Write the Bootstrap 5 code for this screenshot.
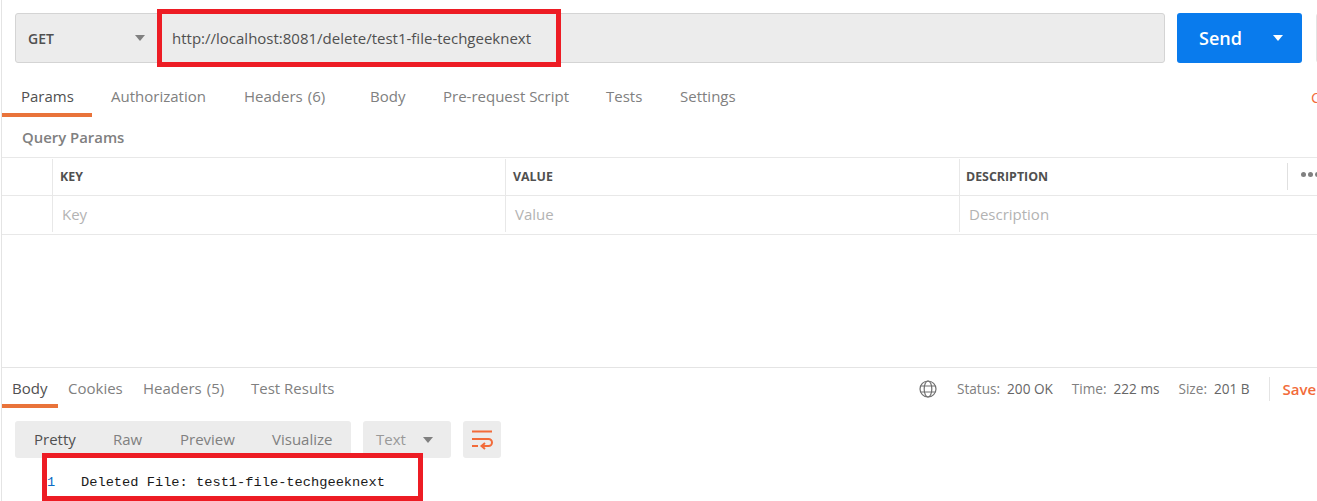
<!DOCTYPE html>
<html lang="en">
<head>
<meta charset="utf-8">
<title>Postman request</title>
<link href="https://cdn.jsdelivr.net/npm/bootstrap@5.3.0/dist/css/bootstrap.min.css" rel="stylesheet">
<style>
html,body{margin:0;height:501px;overflow:hidden;background:#fff}
body{font-family:"Open Sans","Liberation Sans",sans-serif;font-size:15px;color:#808080}
.shell{height:501px;width:1317px;border-left:1px solid #e4e4e4;margin-left:1px;display:flex;flex-direction:column;overflow:hidden;position:relative}
.topbar{margin:13px 0 0 13px;height:50px;display:flex;flex:none}
.urlwrap{flex:none;width:1150px;height:50px;background:#ececec;border:1px solid #d4d4d4;border-radius:3px;display:flex;align-items:center;position:relative}
.method{width:143px;padding-left:12px;display:flex;justify-content:space-between;align-items:center;color:#505050;font-weight:600;font-size:14px;padding-right:14px}
.urltext{padding-left:13px;color:#505050}
.tri{width:0;height:0;border-left:5px solid transparent;border-right:5px solid transparent;border-top:6px solid #808080;display:block}
.sendbtn{flex:none;width:125px;height:50px;margin-left:12px;background:#097bed;border:0;border-radius:3px;color:#fff;font-size:18px;font-weight:600;display:flex;align-items:center;padding:0 0 0 22px;justify-content:space-between}
.sendbtn .tri{border-top-color:#fff;margin-right:19px}
.savestub{flex:none;width:10px;height:50px;margin-left:14px;border:1px solid #e4e4e4;border-radius:3px}
.tabrow{flex:none;display:flex;align-items:center;position:relative;white-space:nowrap}
.reqtabs{height:42px;margin-top:12px}
.tabitem{height:100%;display:flex;align-items:center;font-size:15px;color:#808080;border-bottom:4px solid transparent;padding-top:5px}
.tabitem.on{color:#505050;border-bottom-color:#e9733a}
.w90{width:90px;padding-left:19px}
.w132{width:132px;padding-left:19px}
.w126{width:126px;padding-left:20px}
.w73{width:73px;padding-left:20px}
.w163{width:163px;padding-left:20px}
.w94{width:94px;padding-left:20px}
.r56{width:56px;padding-left:10px}
.r75{width:75px;padding-left:10px}
.r118{width:118px;padding-left:10px}
.cnt{margin-left:5px}
.cookies{position:absolute;left:1309px;top:11px;color:#f26b3a;font-size:15px}
.qplabel{flex:none;height:40px;display:flex;align-items:center;padding-left:20px;font-weight:600;color:#808080;font-size:14.9px}
.grid-row{flex:none;display:flex;border-bottom:1px solid #e8e8e8}
.grid-head{border-top:1px solid #e8e8e8;height:39px;font-size:12.4px;font-weight:700;color:#505050;padding-top:1px}
.grid-body{height:39px;color:#b3b3b3;padding-bottom:2px;font-size:15px}
.cell{display:flex;align-items:center;border-right:1px solid #e8e8e8;padding-left:7px}
.grid-head .c3{padding-left:6px}
.c0{width:51px;padding:0}.c1{width:453px}.c2b{width:454px}
.c3{border-right:0;flex:1;position:relative}
.grid-body .cell{padding-left:9px}
.grid-body .c0{padding:0}
.headsep{position:absolute;left:327px;top:4px;bottom:5px;border-left:1px solid #e0e0e0}
.dots{position:absolute;left:341px;top:13px;display:flex;gap:2px}
.dots i{width:5px;height:5px;border-radius:50%;background:#808080;display:block}
.spacer{flex:1 1 auto;border-bottom:1px solid #e4e4e4}
.restabs{height:40px}
.resmeta{position:absolute;left:917px;top:1px;display:flex;align-items:center;font-size:13.6px;height:100%;color:#808080}
.resmeta b{font-weight:400;color:#666;margin-left:7px}
.metagroup{margin-right:19px}
.globe{margin-right:20px;display:block}
.savelink{color:#f26b3a;font-weight:600;font-size:15px;border-left:1px solid #e4e4e4;padding-left:13px;height:24px;display:flex;align-items:center;width:49px}
.toolbar{flex:none;height:37px;margin:13px 0 0 13px;display:flex;gap:12px}
.seg{background:#ececec;border-radius:3px;display:flex;align-items:center;height:37px}
.fmtgroup{width:336px;padding-left:19px}
.fmtgroup span{color:#808080;font-size:15px}
.fmtgroup span.cur{color:#505050}
.f79{width:79px}.f67{width:67px}.f92{width:92px}
.typesel{width:88px;padding:0 18px 0 13px;justify-content:space-between;color:#999;font-size:15px}
.wrapbtn{width:38px;justify-content:center}
.codeline{flex:none;height:43px;display:flex;align-items:center;font-family:"Liberation Mono","DejaVu Sans Mono",monospace;font-size:13.7px;color:#1a1a1a;padding-top:8px}
.ln{width:79px;padding-left:45px;color:#0b6bc4}
.redbox{position:absolute;border:5px solid #ed1c24;pointer-events:none}
.redurl{left:155px;top:9px;width:404px;height:58px}
.redcode{left:40px;top:453px;width:381px;height:48px}
</style>
</head>
<body>
<div class="shell">
  <div class="topbar">
    <div class="urlwrap">
      <div class="method"><span>GET</span><span class="tri"></span></div>
      <div class="urltext">http://localhost:8081/delete/test1-file-techgeeknext</div>
    </div>
    <button class="sendbtn" type="button"><span>Send</span><span class="tri"></span></button>
    <div class="savestub"></div>
  </div>

  <div class="tabrow reqtabs">
    <div class="tabitem on w90">Params</div>
    <div class="tabitem w132">Authorization</div>
    <div class="tabitem w126">Headers<span class="cnt">(6)</span></div>
    <div class="tabitem w73">Body</div>
    <div class="tabitem w163">Pre-request Script</div>
    <div class="tabitem w94">Tests</div>
    <div class="tabitem">Settings</div>
    <span class="cookies">Cookies</span>
  </div>

  <div class="qplabel">Query Params</div>

  <div class="grid-row grid-head">
    <div class="cell c0"></div>
    <div class="cell c1">KEY</div>
    <div class="cell c2b">VALUE</div>
    <div class="cell c3">DESCRIPTION<span class="headsep"></span><span class="dots"><i></i><i></i><i></i></span></div>
  </div>
  <div class="grid-row grid-body">
    <div class="cell c0"></div>
    <div class="cell c1">Key</div>
    <div class="cell c2b">Value</div>
    <div class="cell c3">Description</div>
  </div>

  <div class="spacer"></div>

  <div class="tabrow restabs">
    <div class="tabitem on r56">Body</div>
    <div class="tabitem r75">Cookies</div>
    <div class="tabitem r118">Headers<span class="cnt">(5)</span></div>
    <div class="tabitem">Test Results</div>
    <div class="resmeta">
      <svg class="globe" width="18" height="18" viewBox="0 0 18 18" fill="none" stroke="#707070" stroke-width="1.2"><circle cx="9" cy="9" r="8"/><ellipse cx="9" cy="9" rx="3.8" ry="8"/><path d="M1.6 6h14.8M1.6 12h14.8"/></svg>
      <span class="metagroup">Status:<b>200 OK</b></span>
      <span class="metagroup">Time:<b>222 ms</b></span>
      <span class="metagroup">Size:<b>201 B</b></span>
      <span class="savelink">Save</span>
    </div>
  </div>

  <div class="toolbar">
    <div class="seg fmtgroup">
      <span class="cur f79">Pretty</span>
      <span class="f67">Raw</span>
      <span class="f92">Preview</span>
      <span>Visualize</span>
    </div>
    <div class="seg typesel"><span>Text</span><span class="tri"></span></div>
    <div class="seg wrapbtn">
      <svg width="22" height="20" viewBox="0 0 22 20" fill="none" stroke="#f26b3a" stroke-width="2"><path d="M1 1.5h20M1 9h16.5a3.5 3.5 0 0 1 0 7H11M1 16h6"/><path d="M14 13l-3.5 3 3.5 3"/></svg>
    </div>
  </div>

  <div class="codeline"><span class="ln">1</span><span>Deleted File: test1-file-techgeeknext</span></div>

  <div class="redbox redurl"></div>
  <div class="redbox redcode"></div>
</div>
</body>
</html>
